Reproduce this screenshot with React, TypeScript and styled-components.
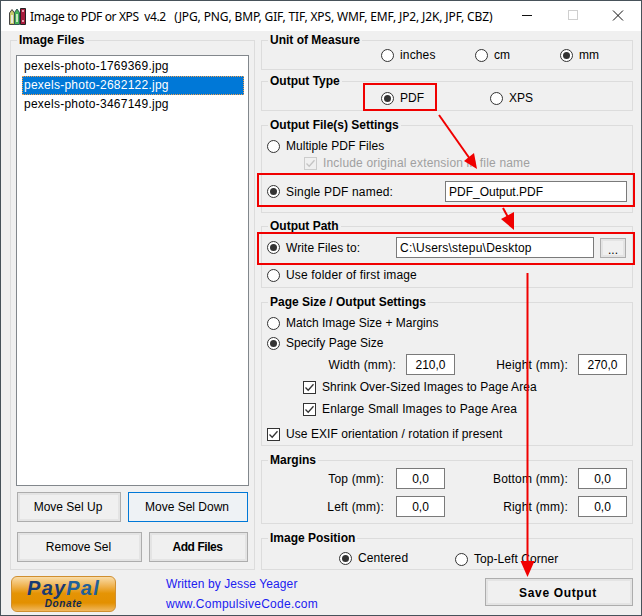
import React from "react";
import styled, { createGlobalStyle } from "styled-components";

const Global = createGlobalStyle`
  html, body { margin: 0; padding: 0; background: #f0f0f0; }
  body { font-family: "Liberation Sans", Arial, sans-serif; font-size: 12px; color: #000; }
`;

const Win = styled.div`
  position: relative;
  box-sizing: border-box;
  width: 642px;
  height: 616px;
  overflow: hidden;
  background: #f0f0f0;
  border: 1px solid #47525a;
  display: flex;
  flex-direction: column;
`;
const TitleBar = styled.div`
  height: 30px;
  background: #fff;
  display: flex;
  align-items: center;
  flex: none;
`;
const AppIcon = styled.svg`
  width: 17px;
  height: 17px;
  margin-left: 8px;
  flex: none;
`;
const TitleText = styled.div`
  margin-left: 4px;
  font-family: "Noto Sans", "Open Sans", sans-serif;
  font-size: 12px;
  white-space: pre;
  color: #000;
  letter-spacing: -0.13px;
`;
const TitleName = styled.span`
  letter-spacing: -0.36px;
`;
const WinControls = styled.svg`
  margin-left: auto;
  width: 120px;
  height: 30px;
  flex: none;
`;
const Main = styled.div`
  display: flex;
  gap: 6px;
  padding: 9px 0 0 9px;
  flex: none;
`;
const LeftCol = styled.div`
  width: 245px;
  flex: none;
`;
const RightCol = styled.div`
  width: 372px;
  flex: none;
  display: flex;
  flex-direction: column;
`;
const Group = styled.div<{ $h: number; $mt?: number }>`
  box-sizing: border-box;
  height: ${(p) => p.$h}px;
  margin-top: ${(p) => p.$mt ?? 0}px;
  border: 1px solid #dcdcdc;
`;
const Legend = styled.div`
  width: fit-content;
  height: 14px;
  line-height: 14px;
  margin: -8px 0 0 6px;
  padding: 0 2px;
  background: #f0f0f0;
  font-weight: bold;
  font-size: 12px;
  white-space: nowrap;
`;
const Row = styled.div<{ $h?: number; $mt?: number; $pl?: number }>`
  display: flex;
  align-items: center;
  height: ${(p) => p.$h ?? 16}px;
  margin-top: ${(p) => p.$mt ?? 0}px;
  padding-left: ${(p) => p.$pl ?? 5}px;
  white-space: nowrap;
`;
const Option = styled.div<{ $w?: number; $ls?: number; $dy?: number }>`
  display: flex;
  align-items: center;
  gap: 6px;
  flex: none;
  letter-spacing: ${(p) => p.$ls ?? 0}px;
  margin-top: ${(p) => p.$dy ?? 0}px;
  ${(p) => (p.$w ? `width: ${p.$w}px;` : "")}
`;
const RadioMark = styled.span<{ $on?: boolean }>`
  box-sizing: border-box;
  width: 13px;
  height: 13px;
  border-radius: 50%;
  border: 1px solid #333;
  background: #fff;
  flex: none;
  display: flex;
  align-items: center;
  justify-content: center;
  &::after {
    content: "";
    width: 7px;
    height: 7px;
    border-radius: 50%;
    background: ${(p) => (p.$on ? "#333" : "transparent")};
  }
`;
const CheckMark = styled.span<{ $off?: boolean }>`
  box-sizing: border-box;
  width: 13px;
  height: 13px;
  border: 1px solid ${(p) => (p.$off ? "#cccccc" : "#333")};
  background: ${(p) => (p.$off ? "#f0f0f0" : "#fff")};
  color: ${(p) => (p.$off ? "#c4c4c4" : "#333")};
  flex: none;
  display: flex;
`;
const Muted = styled.span`
  color: #a0a0a0;
`;
const TextField = styled.input<{ $w: number; $center?: boolean; $ls?: number }>`
  box-sizing: border-box;
  width: ${(p) => p.$w}px;
  height: 21px;
  margin: 0;
  padding: 0 3px;
  border: 1px solid #7a7a7a;
  border-radius: 0;
  background: #fff;
  outline: none;
  font: 12px "Liberation Sans", Arial, sans-serif;
  letter-spacing: ${(p) => p.$ls ?? 0}px;
  color: #000;
  flex: none;
  text-align: ${(p) => (p.$center ? "center" : "left")};
`;
const FieldLabel = styled.span<{ $w: number; $gap: number }>`
  width: ${(p) => p.$w}px;
  margin-right: ${(p) => p.$gap}px;
  text-align: right;
  letter-spacing: 0.2px;
  flex: none;
`;
const Button = styled.button<{ $w: number; $h?: number; $focus?: boolean; $bold?: boolean; $ls?: number }>`
  box-sizing: border-box;
  width: ${(p) => p.$w}px;
  height: ${(p) => p.$h ?? 30}px;
  margin: 0;
  padding: 0 2px 0 0;
  flex: none;
  border: 1px solid ${(p) => (p.$focus ? "#0078d7" : "#adadad")};
  box-shadow: ${(p) => (p.$focus ? "none" : "inset 0 0 0 2px #e4e4e4")};
  background: ${(p) => (p.$focus ? "#eef2f5" : "#f0f0f0")};
  font: ${(p) => (p.$bold ? "bold" : "normal")} 12px "Liberation Sans", Arial, sans-serif;
  letter-spacing: ${(p) => p.$ls ?? 0}px;
  color: #000;
`;
const BrowseButton = styled(Button)`
  margin-left: 6px;
  margin-top: 1px;
  padding: 3px 0 0;
`;
const ListBox = styled.div`
  box-sizing: border-box;
  width: 233px;
  height: 431px;
  margin: 8px 0 0 5px;
  padding: 1px 4px 1px 5px;
  border: 1px solid #82878c;
  background: #fff;
`;
const ListItem = styled.div<{ $sel?: boolean }>`
  box-sizing: border-box;
  height: 19px;
  line-height: 19px;
  padding-left: 2px;
  white-space: nowrap;
  letter-spacing: 0.25px;
  background: ${(p) => (p.$sel ? "#0078d7" : "transparent")};
  color: ${(p) => (p.$sel ? "#fff" : "#000")};
  ${(p) => (p.$sel ? "outline: 1px dotted #f0a050; outline-offset: -1px;" : "")}
`;
const ButtonRow = styled.div<{ $mt: number }>`
  display: flex;
  gap: 7px;
  margin: ${(p) => p.$mt}px 0 0 6px;
`;
const Footer = styled.div`
  position: relative;
  display: flex;
  align-items: flex-start;
  padding-left: 10px;
  flex: none;
`;
const PayPal = styled.div`
  box-sizing: border-box;
  width: 105px;
  height: 36px;
  margin-top: 6px;
  border: 1px solid #d08f30;
  border-radius: 6px;
  background: linear-gradient(#f9dca8 0%, #f0b453 26%, #e59405 48%, #e39000 76%, #f0b860 100%);
  display: flex;
  flex-direction: column;
  align-items: center;
  font-family: "Liberation Sans", Arial, sans-serif;
  font-style: italic;
  font-weight: bold;
`;
const PayWord = styled.div`
  font-size: 20px;
  line-height: 20px;
  letter-spacing: 1.2px;
  color: #1a3a72;
  margin-top: 1px;
`;
const PalPart = styled.span`
  color: #22609a;
`;
const DonateWord = styled.div`
  font-size: 10px;
  line-height: 11px;
  letter-spacing: 0.6px;
  color: #12294f;
`;
const Credits = styled.div`
  margin: 4px 0 0 50px;
  color: #2020f0;
  line-height: 20px;
`;
const CreditLine = styled.div<{ $ls: number }>`
  letter-spacing: ${(p) => p.$ls}px;
`;
const SaveButton = styled(Button)`
  position: absolute;
  right: 8px;
  top: 8px;
  padding: 2px 2px 0 0;
`;
const Annotations = styled.svg`
  position: absolute;
  left: -1px;
  top: -1px;
  width: 642px;
  height: 616px;
  pointer-events: none;
`;

const Radio = ({ on, label, w, ls, dy }: { on?: boolean; label: string; w?: number; ls?: number; dy?: number }) => (
  <Option $w={w} $ls={ls} $dy={dy}>
    <RadioMark $on={on} />
    <span>{label}</span>
  </Option>
);

const Tick = () => (
  <svg width="11" height="11" viewBox="0 0 11 11" fill="none" stroke="currentColor" strokeWidth="1.3">
    <path d="M1.5 5.5 L4.2 8.3 L9.5 2.2" />
  </svg>
);

const Check = ({ label, off, ls }: { label: string; off?: boolean; ls?: number }) => (
  <Option $ls={ls}>
    <CheckMark $off={off}>
      <Tick />
    </CheckMark>
    {off ? <Muted>{label}</Muted> : <span>{label}</span>}
  </Option>
);

export default function App() {
  return (
    <Win>
      <Global />
      <TitleBar>
        <AppIcon viewBox="0 0 17 17">
          <path d="M0.5 16.5V5L3 1.5L5.5 5V16.5Z" fill="#c8c86a" stroke="#444" strokeWidth="1" />
          <path d="M2 7h2v8H2z" fill="#e8e8e0" />
          <path d="M5.5 16.5V4.5L8 1L10.5 4.5V16.5Z" fill="#45b055" stroke="#355" strokeWidth="1" />
          <path d="M7 6h2v8H7z" fill="#c8e8c0" />
          <path d="M11.5 0.5H16.5V16.5H11.5Z" fill="#a51c3c" stroke="#222" strokeWidth="1" />
          <path d="M13 2h2v2h-2zM13 12h2v2h-2z" fill="#e9a0b0" />
        </AppIcon>
        <TitleText>
          <TitleName>{"Image to PDF or XPS  v4.2   "}</TitleName>
          {"(JPG, PNG, BMP, GIF, TIF, XPS, WMF, EMF, JP2, J2K, JPF, CBZ)"}
        </TitleText>
        <WinControls viewBox="0 0 120 30">
          <path d="M1 14.5H11" stroke="#111" strokeWidth="1" />
          <rect x="47.5" y="9.5" width="9" height="9" fill="none" stroke="#cfcfcf" />
          <path d="M92 9.5L102 19.5M102 9.5L92 19.5" stroke="#111" strokeWidth="1" />
        </WinControls>
      </TitleBar>
      <Main>
        <LeftCol>
          <Group $h={530}>
            <Legend>Image Files</Legend>
            <ListBox>
              <ListItem>pexels-photo-1769369.jpg</ListItem>
              <ListItem $sel>pexels-photo-2682122.jpg</ListItem>
              <ListItem>pexels-photo-3467149.jpg</ListItem>
            </ListBox>
            <ButtonRow $mt={6}>
              <Button $w={104}>Move Sel Up</Button>
              <Button $w={120} $focus>Move Sel Down</Button>
            </ButtonRow>
            <ButtonRow $mt={10}>
              <Button $w={125}>Remove Sel</Button>
              <Button $w={99} $bold $ls={-0.45}>Add Files</Button>
            </ButtonRow>
          </Group>
        </LeftCol>
        <RightCol>
          <Group $h={30}>
            <Legend>Unit of Measure</Legend>
            <Row $pl={119}>
              <Radio label="inches" w={94} ls={0.15} />
              <Radio label="cm" w={85} />
              <Radio label="mm" on />
            </Row>
          </Group>
          <Group $h={30} $mt={11}>
            <Legend>Output Type</Legend>
            <Row $pl={119} $h={20}>
              <Radio label="PDF" on w={109} />
              <Radio label="XPS" />
            </Row>
          </Group>
          <Group $h={88} $mt={14}>
            <Legend>Output File(s) Settings</Legend>
            <Row $mt={6}><Radio label="Multiple PDF Files" ls={0.05} /></Row>
            <Row $mt={1} $pl={42}><Check label="Include original extension in file name" off ls={0.18} /></Row>
            <Row $mt={10} $h={21}>
              <Radio label="Single PDF named:" on w={178} ls={0.18} />
              <TextField $w={182} value="PDF_Output.PDF" readOnly />
            </Row>
          </Group>
          <Group $h={62} $mt={13}>
            <Legend>Output Path</Legend>
            <Row $mt={4} $h={21}>
              <Radio label="Write Files to:" on w={129} ls={0.07} />
              <TextField $w={198} $ls={0.23} value="C:\Users\stepu\Desktop" readOnly />
              <BrowseButton $w={26} $h={20}>...</BrowseButton>
            </Row>
            <Row $mt={9}><Radio label="Use folder of first image" ls={0.17} /></Row>
          </Group>
          <Group $h={144} $mt={14}>
            <Legend>Page Size / Output Settings</Legend>
            <Row $mt={6}><Radio label="Match Image Size + Margins" /></Row>
            <Row $mt={4}><Radio label="Specify Page Size" on /></Row>
            <Row $mt={3} $h={21} $pl={0}>
              <FieldLabel $w={134} $gap={10}>Width (mm):</FieldLabel>
              <TextField $w={49} $center value="210,0" readOnly />
              <FieldLabel $w={113} $gap={10}>Height (mm):</FieldLabel>
              <TextField $w={49} $center value="270,0" readOnly />
            </Row>
            <Row $mt={4} $pl={41}><Check label="Shrink Over-Sized Images to Page Area" ls={0.05} /></Row>
            <Row $mt={6} $pl={41}><Check label="Enlarge Small Images to Page Area" ls={0.15} /></Row>
            <Row $mt={9}><Check label="Use EXIF orientation / rotation if present" ls={0.07} /></Row>
          </Group>
          <Group $h={64} $mt={14}>
            <Legend>Margins</Legend>
            <Row $mt={1} $h={21} $pl={0}>
              <FieldLabel $w={122} $gap={12}>Top (mm):</FieldLabel>
              <TextField $w={49} $center value="0,0" readOnly />
              <FieldLabel $w={123} $gap={10}>Bottom (mm):</FieldLabel>
              <TextField $w={49} $center value="0,0" readOnly />
            </Row>
            <Row $mt={7} $h={21} $pl={0}>
              <FieldLabel $w={122} $gap={12}>Left (mm):</FieldLabel>
              <TextField $w={49} $center value="0,0" readOnly />
              <FieldLabel $w={123} $gap={10}>Right (mm):</FieldLabel>
              <TextField $w={49} $center value="0,0" readOnly />
            </Row>
          </Group>
          <Group $h={32} $mt={14}>
            <Legend>Image Position</Legend>
            <Row $mt={5} $pl={77}>
              <Radio label="Centered" on w={116} ls={0.1} />
              <Radio label="Top-Left Corner" dy={2} ls={0.07} />
            </Row>
          </Group>
        </RightCol>
      </Main>
      <Footer>
        <PayPal>
          <PayWord>Pay<PalPart>Pal</PalPart></PayWord>
          <DonateWord>Donate</DonateWord>
        </PayPal>
        <Credits>
          <CreditLine $ls={0.1}>Written by Jesse Yeager</CreditLine>
          <CreditLine $ls={0.27}>www.CompulsiveCode.com</CreditLine>
        </Credits>
        <SaveButton $w={148} $h={28} $bold $ls={0.65}>Save Output</SaveButton>
      </Footer>
      <Annotations viewBox="0 0 642 616">
        <g fill="none" stroke="#f00000" strokeWidth="2">
          <rect x="364" y="84" width="72" height="26" />
          <rect x="258" y="174" width="376" height="32" />
          <rect x="258" y="233" width="376" height="31" />
        </g>
        <g stroke="#f00000" strokeWidth="2" fill="#f00000">
          <path d="M439 115L470 159" fill="none" />
          <path d="M477 169L464 161L474 153Z" stroke="none" />
          <path d="M503 208L509 219" fill="none" />
          <path d="M514 230L501 219L514 212Z" stroke="none" />
          <path d="M527.5 273V565" fill="none" />
          <path d="M527.5 577L520.5 561H534.5Z" stroke="none" />
        </g>
      </Annotations>
    </Win>
  );
}
